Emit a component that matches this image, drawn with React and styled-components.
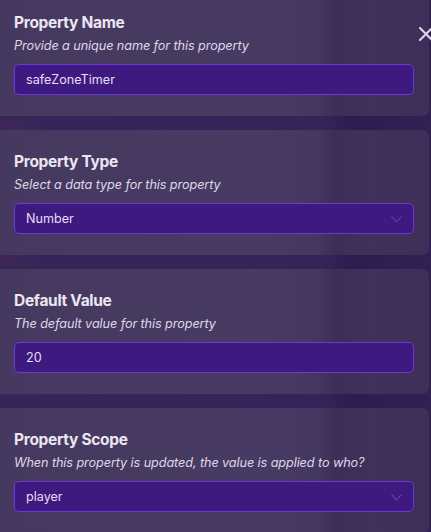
import React from "react";
import styled, { createGlobalStyle } from "styled-components";

const Global = createGlobalStyle`
  html, body { margin: 0; padding: 0; }
  body {
    width: 431px;
    height: 532px;
    overflow: hidden;
    font-family: Inter, "Noto Sans", sans-serif;
    background:
      radial-gradient(ellipse 40px 30px at 10px 130px, rgba(80,40,80,0.35), transparent),
      radial-gradient(ellipse 40px 30px at 10px 258px, rgba(80,40,80,0.3), transparent),
      linear-gradient(90deg, #34265a 0%, #33255a 75%, #2c1d4e 82%, #2f2252 100%);
  }
`;

const Page = styled.div`
  position: relative;
  width: 431px;
  height: 532px;
  overflow: hidden;
`;

const Stack = styled.div`
  display: flex;
  flex-direction: column;
  gap: 14px;
  margin-top: -9px;
  padding-right: 2px;
`;

const Card = styled.section`
  height: 125px;
  box-sizing: border-box;
  padding: 22px 15px 0 14px;
  border-radius: 0 7px 7px 0;
  background: linear-gradient(
    90deg,
    #46395f 0%,
    #483b63 60%,
    #453860 74%,
    #3c2e57 78%,
    #3f3159 86%,
    #3d2f57 100%
  );
  display: flex;
  flex-direction: column;
`;

const Title = styled.h2`
  margin: 0;
  font-size: 15.5px;
  line-height: 19px;
  font-weight: 700;
  color: #ebe7f2;
  letter-spacing: -0.3px;
`;

const Hint = styled.p`
  margin: 6px 0 0;
  font-size: 12.7px;
  line-height: 16px;
  font-style: italic;
  color: #ded8e8;
  letter-spacing: -0.1px;
`;

const Field = styled.div`
  margin-top: 10px;
  width: 400px;
  height: 31px;
  box-sizing: border-box;
  border: 1px solid #6a3ad6;
  border-radius: 5px;
  background: #3e1a80;
  display: flex;
  align-items: center;
  justify-content: space-between;
  padding: 0 11px 0 11px;
  color: #e6def4;
  font-size: 12.6px;
`;

const Value = styled.span`
  letter-spacing: 0;
`;

const Chevron = styled.svg`
  width: 11px;
  height: 7px;
  margin-top: 1px;
`;

const Close = styled.svg`
  position: absolute;
  top: 27px;
  left: 419px;
  width: 14px;
  height: 14px;
`;

const fields = [
  { title: "Property Name", hint: "Provide a unique name for this property", value: "safeZoneTimer" },
  { title: "Property Type", hint: "Select a data type for this property", value: "Number", select: true },
  { title: "Default Value", hint: "The default value for this property", value: "20" },
  { title: "Property Scope", hint: "When this property is updated, the value is applied to who?", value: "player", select: true },
];

export default function App() {
  return (
    <Page>
      <Global />
      <Stack>
        {fields.map((f) => (
          <Card key={f.title}>
            <Title>{f.title}</Title>
            <Hint>{f.hint}</Hint>
            <Field>
              <Value>{f.value}</Value>
              {f.select && (
                <Chevron viewBox="0 0 11 7">
                  <path d="M0.5 0.5 L5.5 6 L10.5 0.5" fill="none" stroke="#6f52b4" strokeWidth="1" />
                </Chevron>
              )}
            </Field>
          </Card>
        ))}
      </Stack>
      <Close viewBox="0 0 14 14">
        <path d="M1 1 L13 13 M13 1 L1 13" stroke="#ddd6ea" strokeWidth="2" strokeLinecap="square" />
      </Close>
    </Page>
  );
}
